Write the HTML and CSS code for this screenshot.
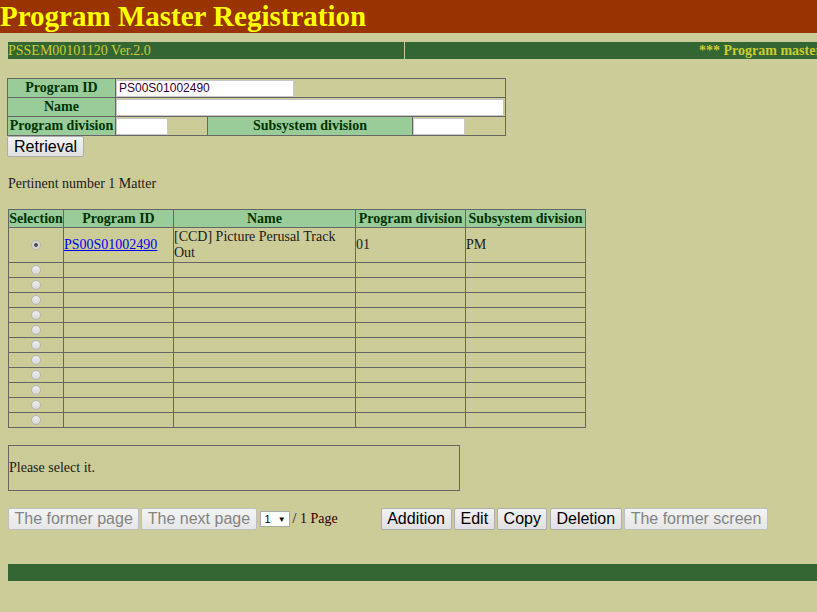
FILE: index.html
```html
<!DOCTYPE html>
<html>
<head>
<meta charset="utf-8">
<link rel="stylesheet" href="styles.css">
</head>
<body>
<div class="title">Program Master Registration</div>
<div class="statusbar">
  <div class="status-id">PSSEM00101120 Ver.2.0</div>
  <div class="status-msg"><span>*** Program master registration ***</span></div>
</div>
<div class="content">
  <table class="search">
    <tr>
      <th class="lbl">Program ID</th>
      <td colspan="3"><input class="in-id" type="text" value="PS00S01002490"></td>
    </tr>
    <tr>
      <th class="lbl">Name</th>
      <td colspan="3"><input class="in-name" type="text" value=""></td>
    </tr>
    <tr>
      <th class="lbl">Program division</th>
      <td class="c-pdiv"><input class="in-small" type="text" value=""></td>
      <th class="lbl c-slbl">Subsystem division</th>
      <td><input class="in-small" type="text" value=""></td>
    </tr>
  </table>
  <button class="btn">Retrieval</button>
  <p class="count">Pertinent number 1 Matter</p>
  <table class="result">
    <tr>
      <th class="w-sel">Selection</th>
      <th class="w-id">Program ID</th>
      <th class="w-name">Name</th>
      <th class="w-pd">Program division</th>
      <th class="w-sd">Subsystem division</th>
    </tr>
    <tr class="first">
      <td class="sel"><input type="radio" name="s" checked disabled></td>
      <td><a href="#">PS00S01002490</a></td>
      <td>[CCD] Picture Perusal Track Out</td>
      <td>01</td>
      <td>PM</td>
    </tr>
    <tr class="empty"><td class="sel"><input type="radio" name="s" disabled></td><td></td><td></td><td></td><td></td></tr>
    <tr class="empty"><td class="sel"><input type="radio" name="s" disabled></td><td></td><td></td><td></td><td></td></tr>
    <tr class="empty"><td class="sel"><input type="radio" name="s" disabled></td><td></td><td></td><td></td><td></td></tr>
    <tr class="empty"><td class="sel"><input type="radio" name="s" disabled></td><td></td><td></td><td></td><td></td></tr>
    <tr class="empty"><td class="sel"><input type="radio" name="s" disabled></td><td></td><td></td><td></td><td></td></tr>
    <tr class="empty"><td class="sel"><input type="radio" name="s" disabled></td><td></td><td></td><td></td><td></td></tr>
    <tr class="empty"><td class="sel"><input type="radio" name="s" disabled></td><td></td><td></td><td></td><td></td></tr>
    <tr class="empty"><td class="sel"><input type="radio" name="s" disabled></td><td></td><td></td><td></td><td></td></tr>
    <tr class="empty"><td class="sel"><input type="radio" name="s" disabled></td><td></td><td></td><td></td><td></td></tr>
    <tr class="empty"><td class="sel"><input type="radio" name="s" disabled></td><td></td><td></td><td></td><td></td></tr>
    <tr class="empty"><td class="sel"><input type="radio" name="s" disabled></td><td></td><td></td><td></td><td></td></tr>
  </table>
  <div class="message">Please select it.</div>
  <div class="actions">
    <div class="paging">
      <button class="btn" disabled>The former page</button>
      <button class="btn" disabled>The next page</button>
      <div class="pagesel"><span>1</span><span class="arrow">&#9660;</span></div>
      <span class="pagetext">/ 1 Page</span>
    </div>
    <div class="ops">
      <button class="btn">Addition</button>
      <button class="btn">Edit</button>
      <button class="btn">Copy</button>
      <button class="btn">Deletion</button>
      <button class="btn" disabled>The former screen</button>
    </div>
  </div>
</div>
<div class="footerbar"></div>
</body>
</html>
```

FILE: styles.css
```css
html, body {
  margin: 0;
  padding: 0;
  background: #cccc99;
  font-family: "Liberation Serif", "Times New Roman", serif;
  font-size: 14px;
  color: #1a1a1a;
  overflow: hidden;
}

.title {
  background: #993300;
  color: #ffff00;
  font-weight: bold;
  font-size: 29px;
  height: 33px;
  line-height: 33px;
  white-space: nowrap;
}

.statusbar {
  display: flex;
  gap: 1px;
  margin: 9px 0 0 8px;
  height: 17px;
  line-height: 17px;
  color: #cccc33;
  font-size: 14px;
}

.status-id {
  width: 396px;
  background: #336633;
  flex: none;
}

.status-msg {
  flex: 1;
  background: #336633;
  overflow: hidden;
  white-space: nowrap;
  font-weight: bold;
  padding-left: 294px;
}

.content {
  padding: 0 0 0 7px;
}

.search {
  border-collapse: collapse;
  margin-top: 19px;
  width: 499px;
  font-size: 14px;
}

.search th, .search td {
  border: 1px solid #666666;
  padding: 0;
  height: 18px;
  line-height: 16px;
}

.search td {
  text-align: left;
}

.lbl {
  background: #99cc99;
  color: #003300;
  font-weight: bold;
  white-space: nowrap;
}

.search .lbl:first-child {
  width: 107px;
}

.c-pdiv {
  width: 91px;
}

.c-slbl {
  width: 204px;
}

.search input {
  box-sizing: border-box;
  height: 17px;
  border: 1px solid #c8c8c8;
  background: #ffffff;
  font-family: "Liberation Sans", Arial, sans-serif;
  font-size: 12px;
  color: #330033;
  padding: 0 2px;
  margin: 0;
  display: block;
}

.in-id { width: 178px; }
.in-name { width: 388px; }
.in-small { width: 52px; }

.btn {
  font-family: "Liberation Sans", Arial, sans-serif;
  font-size: 16px;
  height: 22px;
  padding: 0 5.5px;
  margin: 0;
  border: 1px solid #adadad;
  border-radius: 2px;
  background: linear-gradient(#f2f2f2, #e0e0e0);
  color: #000000;
  line-height: 20px;
}

.btn:disabled {
  color: #838383;
  border-color: #bfbfbf;
  background: linear-gradient(#f4f4f4, #e6e6e6);
}

.content > .btn {
  display: block;
  margin-top: 0;
  height: 21px;
  padding: 0 6px;
}

.count {
  margin: 19px 0 0 1px;
  line-height: 15px;
}

.result {
  border-collapse: collapse;
  margin: 18px 0 0 1px;
  width: 578px;
  font-size: 14px;
}

.result th, .result td {
  border: 1px solid #666666;
  padding: 0;
}

.result th {
  background: #99cc99;
  color: #003300;
  font-weight: bold;
  height: 17px;
  line-height: 16px;
  white-space: nowrap;
}

.w-sel { width: 54px; }
.w-id { width: 109px; }
.w-name { width: 181px; }
.w-pd { width: 109px; }

.result .first td {
  height: 34px;
  vertical-align: middle;
  line-height: 16px;
}

.result .empty td {
  height: 14px;
}

.result .sel {
  text-align: center;
}

.result input[type=radio] {
  appearance: none;
  -webkit-appearance: none;
  box-sizing: border-box;
  width: 10px;
  height: 10px;
  margin: 0 auto;
  display: block;
  border-radius: 50%;
  border: 1px solid #b4b4b4;
  background: linear-gradient(#eeeeee, #d8d8d8);
}

.result input[type=radio]:checked {
  background: radial-gradient(circle, #555555 0, #555555 1.6px, #d0d0d0 2.2px, #e6e6e6 100%);
}

.result a {
  color: #0000ee;
}

.message {
  margin: 17px 0 0 1px;
  width: 450px;
  height: 44px;
  border: 1px solid #666666;
  display: flex;
  align-items: center;
}

.actions {
  display: flex;
  align-items: center;
  margin: 17px 0 0 1px;
}

.paging {
  display: flex;
  align-items: center;
  gap: 2px;
}

.pagesel {
  margin-left: 1px;
  width: 30px;
  height: 16px;
  box-sizing: border-box;
  border: 1px solid #aaaaaa;
  background: #ffffff;
  display: flex;
  align-items: center;
  justify-content: space-between;
  padding: 0 3px 0 4px;
  font-family: "Liberation Sans", Arial, sans-serif;
  font-size: 11px;
  color: #000;
}

.pagesel .arrow {
  font-size: 8px;
}

.pagetext {
  color: #330000;
  margin-left: 1px;
}

.ops {
  display: flex;
  gap: 2.5px;
  margin-left: 43px;
}

.footerbar {
  margin: 34px 0 0 8px;
  height: 17px;
  background: #336633;
}
```
